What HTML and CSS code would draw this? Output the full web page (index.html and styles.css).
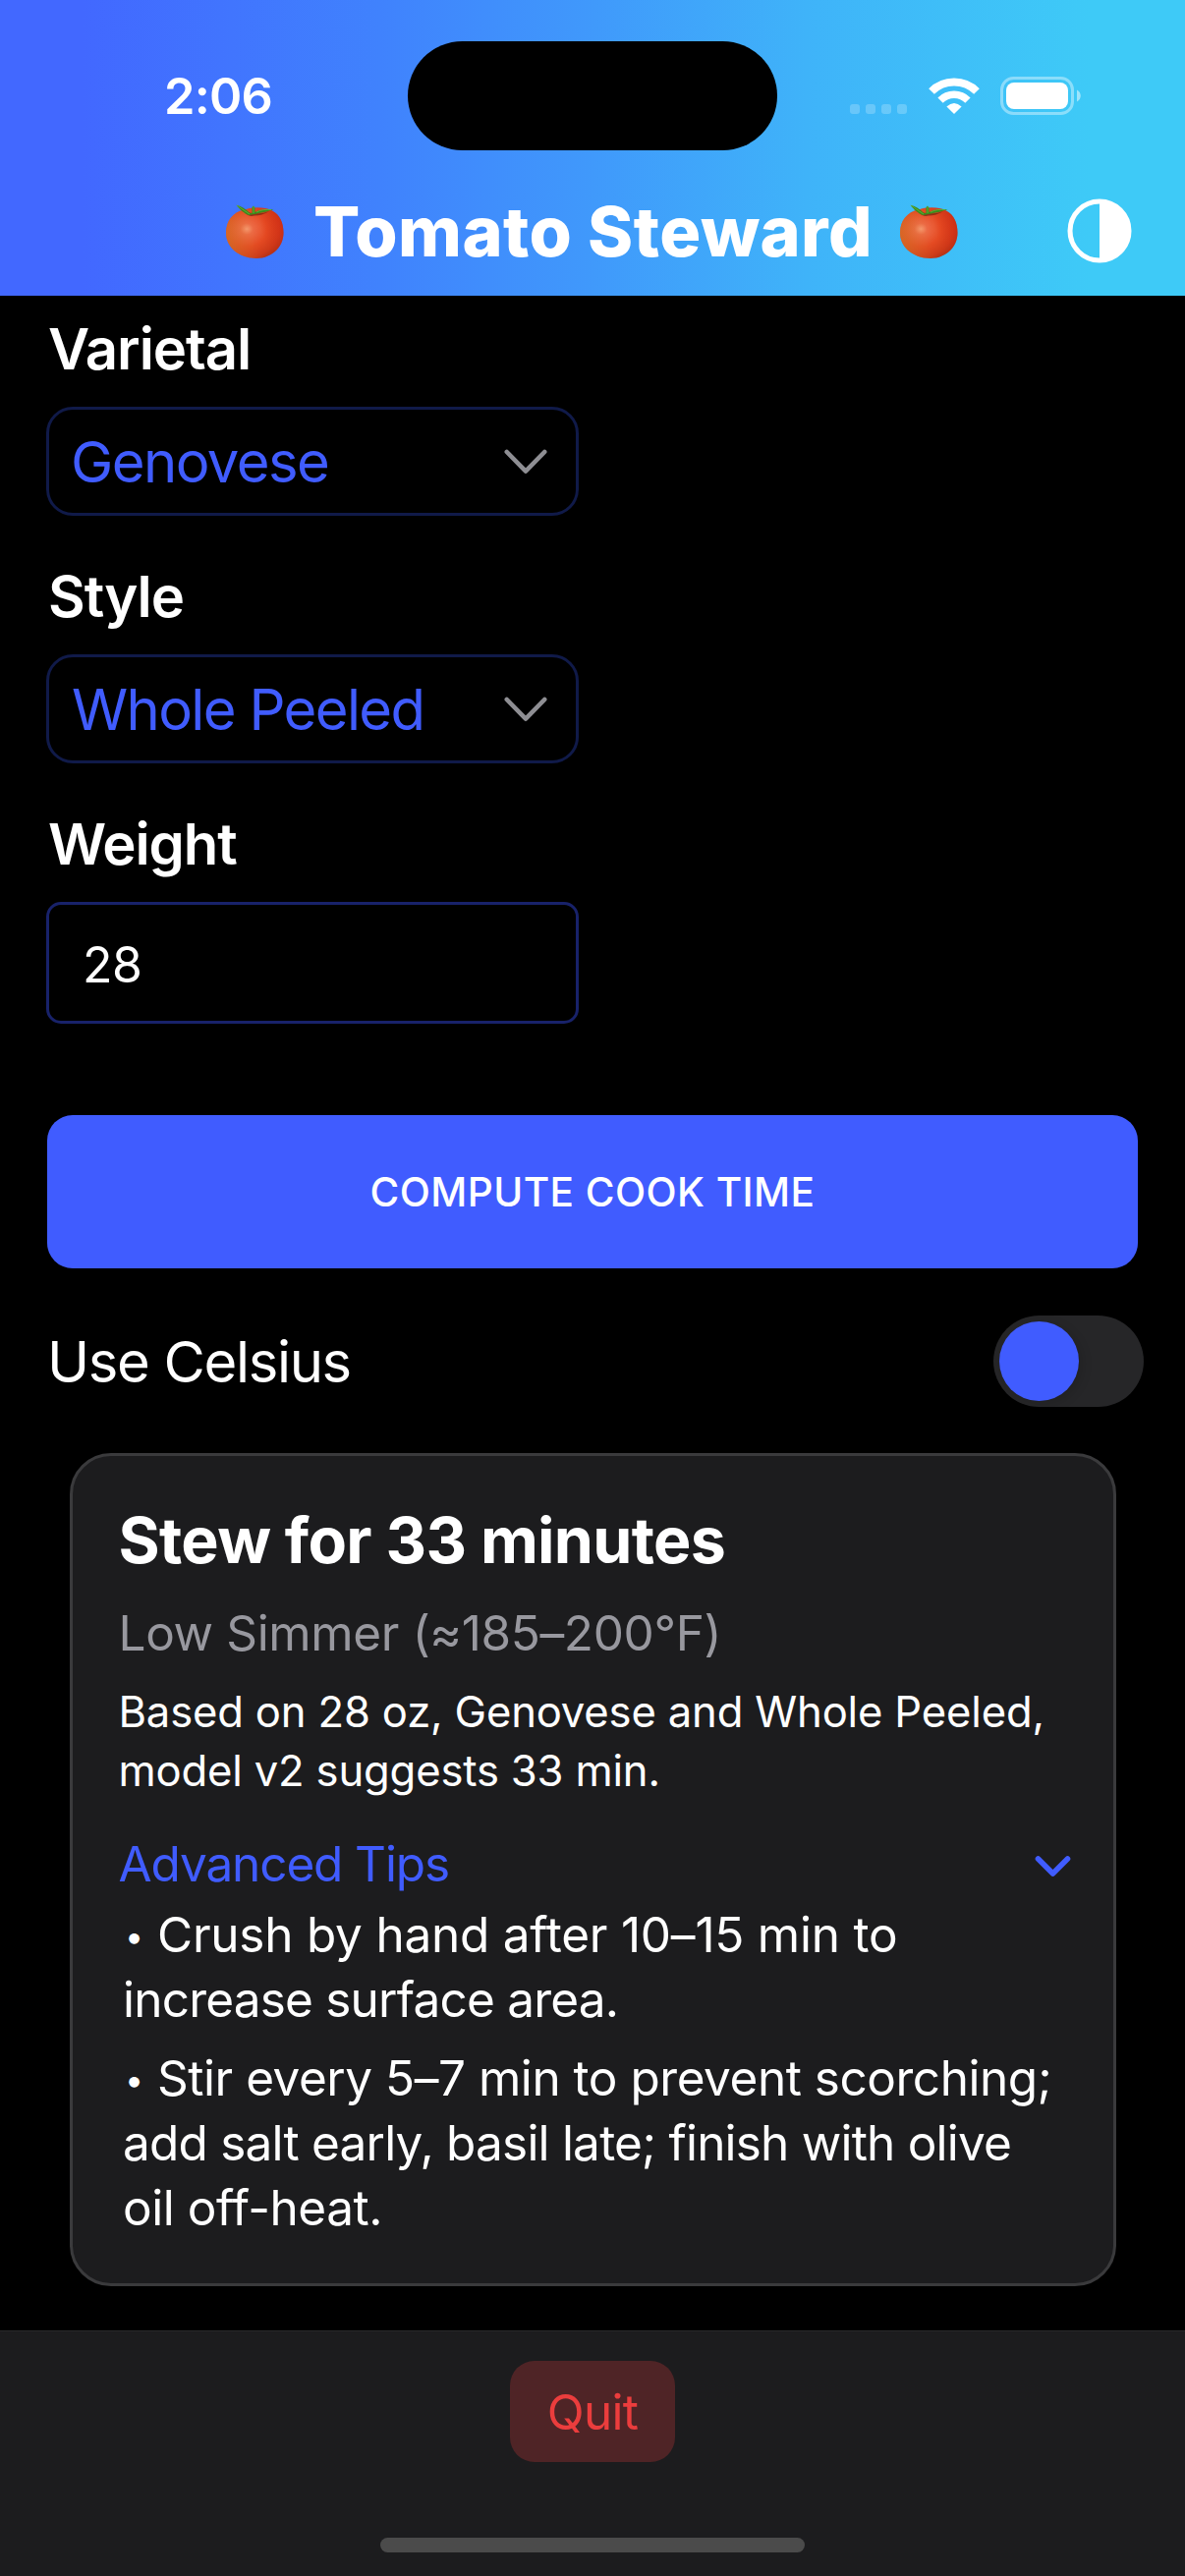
FILE: index.html
```html
<!DOCTYPE html>
<html lang="en">
<head>
<meta charset="utf-8">
<title>Tomato Steward</title>
<link rel="stylesheet" href="styles.css">
</head>
<body>
<svg class="defs" width="0" height="0" aria-hidden="true">
  <defs>
    <radialGradient id="skin" cx="0.36" cy="0.42" r="0.7">
      <stop offset="0" stop-color="#fba27c"/>
      <stop offset="0.16" stop-color="#ee6c48"/>
      <stop offset="0.5" stop-color="#e44a22"/>
      <stop offset="0.8" stop-color="#cc3a18"/>
      <stop offset="1" stop-color="#a52e14"/>
    </radialGradient>
    <linearGradient id="glow" x1="0" y1="0.5" x2="1" y2="0.3">
      <stop offset="0" stop-color="#d07a28" stop-opacity="0.6"/>
      <stop offset="0.4" stop-color="#d86a28" stop-opacity="0.15"/>
      <stop offset="0.6" stop-color="#e03018" stop-opacity="0"/>
      <stop offset="1" stop-color="#e02a18" stop-opacity="0.5"/>
    </linearGradient>
    <symbol id="tomato" viewBox="0 0 61 56">
      <path d="M20 5.500C27 2.500 41 2.500 48 6.500C56 10.500 59.500 19 59.500 29C59.500 44 47 55 32 55C16 55 1 45 1 29C1 17 8 7.500 20 5.500Z" fill="url(#skin)"/>
      <path d="M20 5.500C27 2.500 41 2.500 48 6.500C56 10.500 59.500 19 59.500 29C59.500 44 47 55 32 55C16 55 1 45 1 29C1 17 8 7.500 20 5.500Z" fill="url(#glow)"/>
      <path d="M20 8C23 12 27 12.500 30 11.500C35 11.500 40 10 45 7C38 10 33 9 29 9Z" fill="#5c1c0c" opacity="0.6"/>
      <path d="M11.500 0.800C16 1.500 21 5 25.500 9L27.500 9L27.500 3L29 1.500L30.500 3.500L30.500 8C36 5 43 4.500 49.500 5.500C44 6.500 41 8 37 8.500C34 9 32 9.500 30 10L24 11C20 9.500 15 5.500 11.500 0.800Z" fill="#3b8a1c"/>
      <path d="M12 1L25 10M29 2L29 9M32 8C36 5.500 42 5 47 5.500" fill="none" stroke="#69b53a" stroke-width="0.800"/>
    </symbol>
  </defs>
</svg>

<header class="header">
  <div class="status">
    <div class="time">2:06</div>
    <div class="island"></div>
    <div class="signal"><i></i><i></i><i></i><i></i></div>
    <svg class="wifi" viewBox="0 0 52 38" width="52" height="38">
      <g fill="none" stroke="#fff">
        <path d="M3.020 14.020A32.500 32.500 0 0 1 48.980 14.020" stroke-width="8"/>
        <path d="M12.040 23.040A19.750 19.750 0 0 1 39.960 23.040" stroke-width="7.500"/>
      </g>
      <path d="M26 37L18.400 29.400Q26 22.400 33.600 29.400Z" fill="#fff"/>
    </svg>
    <svg class="battery" viewBox="0 0 82 39" width="82" height="39">
      <rect x="1.500" y="1.500" width="72" height="36" rx="12" fill="none" stroke="#fff" stroke-opacity="0.4" stroke-width="3"/>
      <rect x="6" y="6" width="63" height="27" rx="8" fill="#fff"/>
      <path d="M78 13.500C83 16 83 23 78 25.500Z" fill="#fff" fill-opacity="0.5"/>
    </svg>
  </div>
  <div class="titlebar">
    <svg class="tomato" width="61" height="56"><use href="#tomato"/></svg>
    <h1 class="title">Tomato Steward</h1>
    <svg class="tomato" width="61" height="56"><use href="#tomato"/></svg>
    <svg class="contrast" viewBox="0 0 66 66" width="66" height="66">
      <circle cx="33" cy="33" r="30" fill="none" stroke="#fff" stroke-width="5"/>
      <path d="M33 3A30 30 0 0 1 33 63Z" fill="#fff"/>
    </svg>
  </div>
</header>

<main class="main">
  <label class="label">Varietal</label>
  <div class="select">
    <span class="value">Genovese</span>
    <svg viewBox="0 0 44 26" width="44" height="26"><path d="M2.800 3L22 22.700L41.200 3" fill="none" stroke="#8e8e93" stroke-width="4.600" stroke-linecap="round" stroke-linejoin="round"/></svg>
  </div>
  <label class="label">Style</label>
  <div class="select">
    <span class="value value-wide">Whole Peeled</span>
    <svg viewBox="0 0 44 26" width="44" height="26"><path d="M2.800 3L22 22.700L41.200 3" fill="none" stroke="#8e8e93" stroke-width="4.600" stroke-linecap="round" stroke-linejoin="round"/></svg>
  </div>
  <label class="label">Weight</label>
  <div class="input">28</div>

  <div class="compute">COMPUTE COOK TIME</div>

  <div class="toggle-row">
    <span class="toggle-label">Use Celsius</span>
    <span class="toggle"><span class="knob"></span></span>
  </div>

  <section class="card">
    <h2 class="card-title">Stew for 33 minutes</h2>
    <p class="heat">Low Simmer (≈185–200°F)</p>
    <p class="basis">Based on 28 oz, Genovese and Whole Peeled,<br>model v2 suggests 33 min.</p>
    <div class="tips-head">
      <span>Advanced Tips</span>
      <svg viewBox="0 0 37 23" width="37" height="23"><path d="M3.500 4L18.500 19L33.500 4" fill="none" stroke="#405cff" stroke-width="5.600" stroke-linecap="round" stroke-linejoin="round"/></svg>
    </div>
    <p class="tip"><span class="dot">•</span>Crush by hand after 10–15 min to<br><span class="snug">increase surface area.</span></p>
    <p class="tip"><span class="dot">•</span><span class="even">Stir every 5–7 min to prevent scorching;</span><br><span class="snug">add salt early, basil late; finish with olive</span><br><span class="even">oil off-heat.</span></p>
  </section>
</main>

<footer class="footer">
  <div class="quit">Quit</div>
  <div class="home"></div>
</footer>
</body>
</html>
```

FILE: styles.css
```css
* { box-sizing: border-box; }

body {
  margin: 0;
  width: 1206px;
  height: 2622px;
  display: flex;
  flex-direction: column;
  background: #000;
  color: #fff;
  font-family: Inter, "Liberation Sans", sans-serif;
  overflow: hidden;
}

h1, h2, p { margin: 0; }
svg { display: block; flex: none; }
.defs { position: absolute; }

/* Header */
.header {
  height: 301px;
  flex: none;
  padding-top: 42px;
  background: linear-gradient(90deg, #4268ff 7%, #4082fd 32%, #4099fb 50%, #3fb3f9 68%, #3ecaf7 92%);
}

.status {
  display: flex;
  align-items: center;
  height: 111px;
  padding-left: 167px;
}

.time {
  width: 248px;
  font-size: 50.5px;
  font-weight: 600;
  line-height: 60px;
  letter-spacing: -0.8px;
}

.island {
  width: 376px;
  height: 111px;
  border-radius: 56px;
  background: #000;
}

.signal { display: flex; gap: 6px; margin: 27px 0 0 74px; }

.signal i {
  width: 10px;
  height: 10px;
  border-radius: 3px;
  background: rgba(255, 255, 255, 0.22);
}

.wifi { margin-left: 21.5px; }
.battery { margin-left: 21.5px; }

.titlebar {
  display: flex;
  align-items: center;
  height: 132px;
  margin-top: 16px;
  padding: 0 54px 0 229px;
}

.title {
  margin: 2px 27px 0 29px;
  font-size: 70px;
  font-weight: 800;
  line-height: 84px;
  letter-spacing: 0.44px;
  white-space: nowrap;
}

.tomato { margin-top: 2px; }
.contrast { margin-left: auto; }

/* Form */
.main {
  flex: none;
  height: 2071px;
  padding: 19px 48px 0 47px;
}

.label {
  display: block;
  padding-left: 2px;
  font-size: 58px;
  font-weight: 600;
  line-height: 70px;
  letter-spacing: -1.05px;
}

.select {
  display: flex;
  align-items: center;
  justify-content: space-between;
  width: 542px;
  height: 111px;
  margin: 24px 0 47px;
  padding: 0 29px 0 22px;
  border: 3px solid #101a49;
  border-radius: 27px;
}

.value {
  color: #405cff;
  font-size: 58px;
  line-height: 70px;
  letter-spacing: -1.56px;
}

.value-wide { padding-left: 1px; letter-spacing: -1.65px; }

.input {
  width: 542px;
  height: 124px;
  margin: 24px 0 93px;
  padding: 31px 0 0 34px;
  border: 3px solid #18226a;
  border-radius: 15px;
  font-size: 50px;
  line-height: 60px;
  letter-spacing: -0.5px;
}

.compute {
  height: 156px;
  margin-left: 1px;
  border-radius: 26px;
  background: #405cff;
  font-size: 40.6px;
  font-weight: 500;
  line-height: 158px;
  letter-spacing: 0.44px;
  text-align: center;
}

.toggle-row {
  display: flex;
  align-items: center;
  justify-content: space-between;
  height: 93px;
  margin: 48px -6px 46px 1px;
}

.toggle-label {
  font-size: 58px;
  line-height: 70px;
  letter-spacing: -1.35px;
}

.toggle {
  width: 153px;
  height: 93px;
  padding: 6px;
  border-radius: 47px;
  background: #262628;
}

.knob {
  display: block;
  width: 81px;
  height: 81px;
  border-radius: 50%;
  background: #405cff;
  box-shadow: 3px 3px 12px rgba(0, 0, 0, 0.14);
}

/* Result card */
.card {
  width: 1065px;
  height: 848px;
  margin: 47px 0 0 24px;
  padding: 46px 43px 0 46.5px;
  border: 3px solid #3a3a3c;
  border-radius: 42px;
  background: #1c1c1e;
}

.card-title {
  font-size: 64.5px;
  font-weight: 700;
  line-height: 80px;
  letter-spacing: -0.7px;
}

.heat {
  margin-top: 24px;
  color: #98989f;
  font-size: 49.5px;
  line-height: 60px;
  letter-spacing: -0.36px;
}

.basis {
  margin-top: 21px;
  font-size: 43.6px;
  line-height: 60px;
  letter-spacing: -0.17px;
  white-space: nowrap;
}

.tips-head {
  display: flex;
  align-items: center;
  justify-content: space-between;
  margin-top: 34px;
  color: #405cff;
  font-size: 49.5px;
  line-height: 60px;
  letter-spacing: -1.12px;
}

.tips-head svg { margin-top: 4px; }

.tip {
  margin: 9px 0 14px;
  padding-left: 4.5px;
  font-size: 49.5px;
  line-height: 66px;
  letter-spacing: -0.23px;
  white-space: nowrap;
}

.tip + .tip { margin-top: 0; }
.snug { letter-spacing: -0.79px; }
.even { letter-spacing: -0.47px; }

.dot {
  display: inline-block;
  width: 35px;
  padding-left: 2px;
  font-size: 34px;
  line-height: 34px;
  vertical-align: 4px;
}

/* Footer */
.footer {
  flex: 1;
  display: flex;
  flex-direction: column;
  align-items: center;
  padding-top: 30px;
  border-top: 1px solid #29292b;
  background: #1c1c1e;
}

.quit {
  width: 168px;
  height: 103px;
  border-radius: 25px;
  background: #4f2426;
  color: #eb3d3d;
  font-size: 49.5px;
  line-height: 104px;
  letter-spacing: -0.7px;
  text-align: center;
}

.home {
  width: 432px;
  height: 15px;
  margin-top: 77px;
  border-radius: 8px;
  background: #4b4b4b;
}
```
